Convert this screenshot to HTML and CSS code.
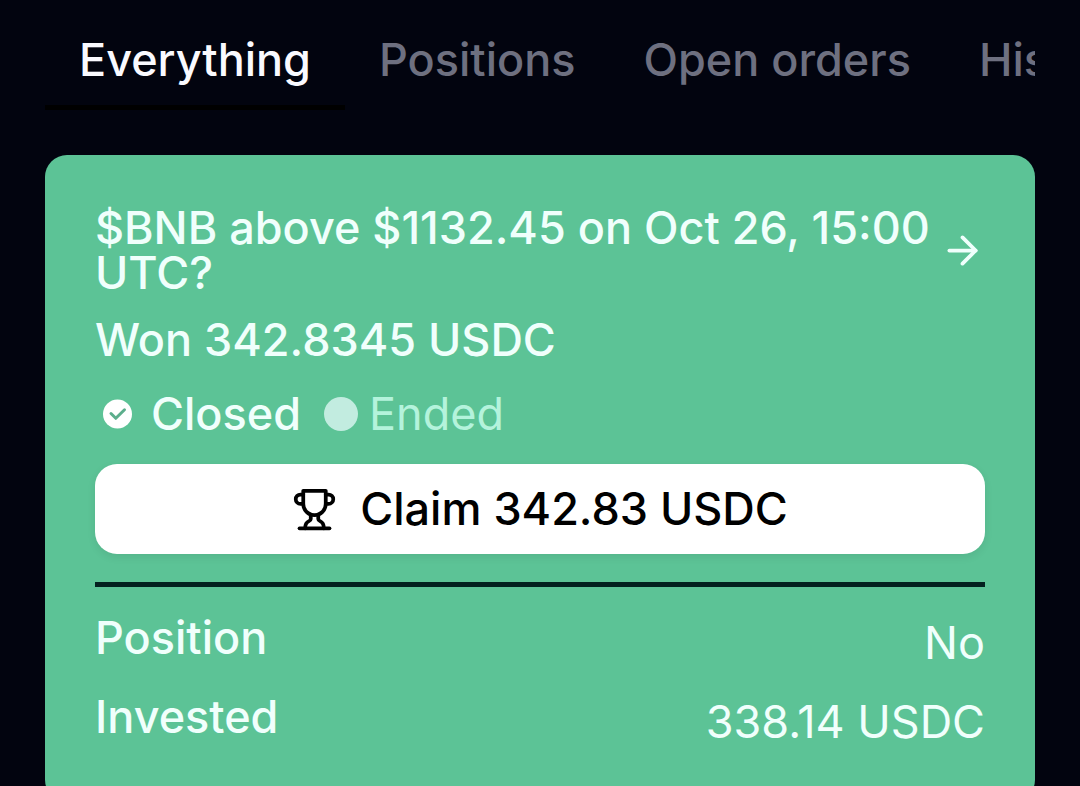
FILE: index.html
```html
<!DOCTYPE html>
<html lang="en">

<head>
  <meta charset="UTF-8" />
  <meta name="viewport" content="width=device-width, initial-scale=1.0" />
  <title>Positions</title>
  <link rel="stylesheet" href="styles.css">
</head>

<body>
  <nav class="tabs">
    <button type="button" class="tab active">Everything</button>
    <button type="button" class="tab">Positions</button>
    <button type="button" class="tab">Open orders</button>
    <button type="button" class="tab">History</button>
  </nav>

  <main class="card">
    <a href="#" class="market">
      <span class="title">$BNB above $1132.45 on Oct 26, 15:00 UTC?</span>
      <svg class="icon" viewBox="0 0 24 24">
        <path d="M5 12h14" />
        <path d="m12 5 7 7-7 7" />
      </svg>
    </a>
    <p class="result">Won 342.8345 USDC</p>

    <div class="statusRow">
      <span class="status">
        <svg class="icon" viewBox="0 0 45 45">
          <circle class="checkBg" cx="22.5" cy="22" r="14.5" />
          <path class="checkMark" d="M16 21.5l4.8 4.8 8.7-8.5" />
        </svg>
        Closed
      </span>
      <span class="status ended"><span class="dot"></span>Ended</span>
    </div>

    <button type="button" class="claimBtn">
      <svg class="icon" viewBox="0 0 24 24">
        <path d="M6 9H4.5a2.5 2.5 0 0 1 0-5H6" />
        <path d="M18 9h1.5a2.5 2.5 0 0 0 0-5H18" />
        <path d="M4 22h16" />
        <path d="M10 14.66V17c0 .55-.47.98-.97 1.21C7.85 18.75 7 20.24 7 22" />
        <path d="M14 14.66V17c0 .55.47.98.97 1.21C16.15 18.75 17 20.24 17 22" />
        <path d="M18 2H6v7a6 6 0 0 0 12 0V2Z" />
      </svg>
      Claim 342.83 USDC
    </button>

    <dl class="details">
      <div class="detail">
        <dt>Position</dt>
        <dd>No</dd>
      </div>
      <div class="detail">
        <dt>Invested</dt>
        <dd>338.14 USDC</dd>
      </div>
    </dl>
  </main>
</body>

</html>
```

FILE: styles.css
```css
* {
  box-sizing: border-box;
}

html {
  scrollbar-width: none;
}

body {
  margin: 0;
  padding: 30px 45px;
  background-color: #02040f;
  color: #f0fffc;
  font-family: Inter, "Liberation Sans", sans-serif;
  font-size: 45px;
  font-weight: 500;
  line-height: 60px;
}

button {
  border: none;
  font: inherit;
  cursor: pointer;
}

.tabs {
  display: flex;
  overflow: hidden;
  margin-bottom: 45px;
}

.tab {
  flex-shrink: 0;
  padding: 0 34px 15px;
  background: none;
  border-bottom: 5px solid transparent;
  color: #6e7080;
}

.tab.active {
  color: #fafaff;
  border-color: #000;
}

.card {
  padding: 50px;
  border-radius: 22px;
  background-color: #5cc396;
}

.icon {
  flex-shrink: 0;
  width: 45px;
  height: 45px;
  fill: none;
  stroke: currentColor;
  stroke-width: 2;
  stroke-linecap: round;
  stroke-linejoin: round;
}

.market {
  display: flex;
  align-items: center;
  justify-content: space-between;
  color: inherit;
  line-height: 45px;
  text-decoration: none;
}

.result {
  margin: 15px 0 14px;
}

.statusRow {
  display: flex;
  gap: 23px;
}

.status {
  display: flex;
  align-items: center;
  gap: 11px;
}

.checkBg {
  fill: #fff;
  stroke: none;
}

.checkMark {
  stroke: #5cae8c;
  stroke-width: 3;
}

.ended {
  color: #b4f3dc;
  font-weight: 400;
}

.dot {
  width: 34px;
  height: 34px;
  border-radius: 50%;
  background-color: #c2ece0;
}

.claimBtn {
  display: flex;
  align-items: center;
  justify-content: center;
  gap: 23px;
  width: 100%;
  height: 90px;
  margin: 20px 0 28px;
  border-radius: 22px;
  background-color: #fff;
  color: #000;
  box-shadow: 0 3px 8px rgba(0, 0, 0, 0.08);
}

.details {
  display: grid;
  gap: 19px;
  margin: 0;
  padding-top: 26px;
  border-top: 5px solid #03211f;
}

.detail {
  display: flex;
  justify-content: space-between;
}

dt {
  line-height: 50px;
}

dd {
  margin: 0;
  font-weight: 400;
}
```
